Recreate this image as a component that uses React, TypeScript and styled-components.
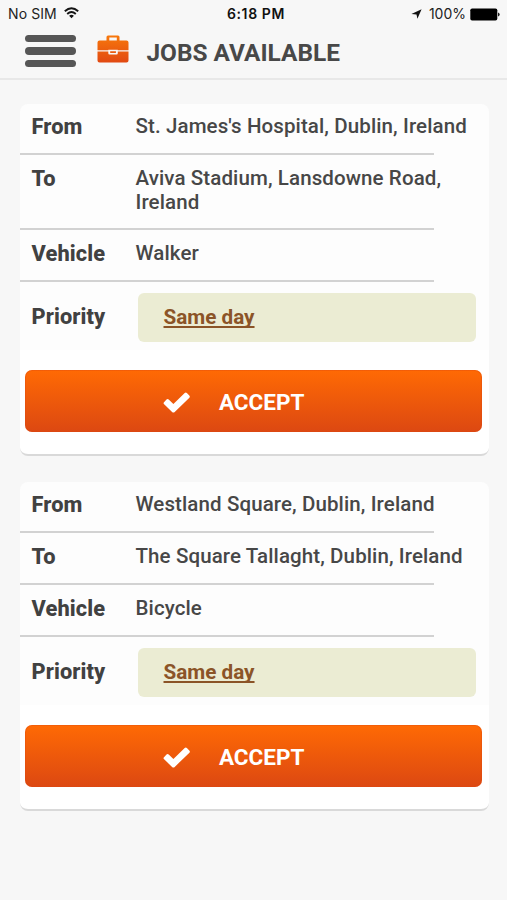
import React from 'react';
import styled, { createGlobalStyle } from 'styled-components';

const GlobalStyle = createGlobalStyle`
  * { box-sizing: border-box; }
  body { margin: 0; background: #f7f7f7; color: #414141; font-family: Roboto, "Liberation Sans", sans-serif; }
`;

const Screen = styled.div`
  width: 507px;
  height: 900px;
  overflow: hidden;
  background: #f7f7f7;
`;

const StatusBar = styled.div`
  display: grid;
  grid-template-columns: 1fr auto 1fr;
  align-items: center;
  height: 28px;
  padding: 0 7px 0 8px;
  font: 400 14px/28px Inter, sans-serif;
  color: #222;
`;

const Carrier = styled.div`
  display: flex;
  align-items: center;
  gap: 7px;
  letter-spacing: 0.1px;
  svg { margin-top: -3px; }
`;

const Clock = styled.div`
  padding-left: 4px;
  font-weight: 600;
  letter-spacing: 0.6px;
  color: #111;
`;

const Power = styled.div`
  display: flex;
  justify-content: flex-end;
  align-items: center;
  letter-spacing: 0;
  svg:first-child { margin-right: 7px; }
  svg:last-child { margin-left: 4px; }
`;

const Header = styled.header`
  display: flex;
  align-items: flex-start;
  height: 52px;
  padding-left: 25px;
  border-bottom: 2px solid #e8e8e8;
`;

const MenuButton = styled.button`
  display: flex;
  flex-direction: column;
  gap: 5.3px;
  width: 51px;
  padding: 0;
  margin-top: 7px;
  border: 0;
  background: none;
`;

const MenuLine = styled.span`
  height: 7.2px;
  border-radius: 4px;
  background: #565656;
`;

const Briefcase = styled.svg`
  margin: 7.3px 0 0 21px;
`;

const Title = styled.h1`
  margin: 8px 0 0 17.5px;
  font-size: 24.4px;
  line-height: 34px;
  font-weight: 700;
  letter-spacing: 0;
  color: #484848;
`;

const JobList = styled.main`
  display: flex;
  flex-direction: column;
  gap: 26px;
  padding: 24px 18.5px 0 19.5px;
`;

const Card = styled.article`
  padding-bottom: 22px;
  border-radius: 8px;
  border-bottom: 2px solid #d9d9d9;
  background: linear-gradient(#fdfdfd calc(100% - 104px), #fff calc(100% - 104px));
`;

const Row = styled.div<{ $first?: boolean; $tall?: boolean }>`
  display: grid;
  grid-template-columns: 104px 1fr;
  width: 414px;
  height: ${p => (p.$tall ? 75 : p.$first ? 51 : 52)}px;
  padding: ${p => (p.$first ? 9.5 : 11)}px 0 0 12px;
  border-bottom: 2px solid #d2d2d2;
`;

const Label = styled.span<{ $inRow?: boolean }>`
  padding-top: ${p => (p.$inRow ? 1 : 0)}px;
  font-size: 21.8px;
  line-height: 24px;
  font-weight: 800;
  letter-spacing: 0.1px;
  color: #414141;
`;

const Value = styled.span`
  font-size: 20.5px;
  line-height: 24px;
  font-weight: 500;
  letter-spacing: 0.11px;
  white-space: pre;
  color: #474747;
`;

const PriorityRow = styled.div`
  display: grid;
  grid-template-columns: 106px 338.5px;
  align-items: center;
  padding: 10.5px 0 0 12px;
`;

const PriorityBox = styled.div`
  height: 49px;
  padding: 12px 0 0 26px;
  border-radius: 6px;
  background: #ebecd3;
`;

const PriorityLink = styled.a`
  display: block;
  font-size: 20.7px;
  line-height: 25px;
  font-weight: 700;
  color: #8b5427;
  text-decoration: underline;
  text-decoration-thickness: 1.5px;
  text-underline-offset: 2px;
  text-decoration-skip-ink: none;
`;

const AcceptButton = styled.button`
  display: flex;
  align-items: center;
  width: 457px;
  height: 62px;
  margin: 28.5px 0 0 5.9px;
  padding: 2px 0 0 137.5px;
  border: 0;
  border-radius: 7px;
  background: linear-gradient(#ff6a04, #dc4812);
  box-shadow: inset 0 0 0 1px rgba(220, 72, 18, 0.35);
  color: #fff;
  font: 700 22.5px/28px Roboto, sans-serif;
  svg { margin: 0 28px 0 0; }
`;

type Job = { from: string; to: string; vehicle: string; priority: string };

const jobs: Job[] = [
  {
    from: "St. James's Hospital, Dublin, Ireland",
    to: 'Aviva Stadium, Lansdowne Road,\nIreland',
    vehicle: 'Walker',
    priority: 'Same day',
  },
  {
    from: 'Westland Square, Dublin, Ireland',
    to: 'The Square Tallaght, Dublin, Ireland',
    vehicle: 'Bicycle',
    priority: 'Same day',
  },
];

const WifiIcon = () => (
  <svg width="15" height="12" viewBox="0 0 15 12" fill="none" stroke="#151515" strokeWidth="1.9">
    <path d="M.8 4.3Q7.5-1.8 14.2 4.3M3.2 7Q7.5 3.2 11.8 7" />
    <path d="M5.1 8.8Q7.5 6.8 9.9 8.8L7.5 11.3Z" fill="#151515" stroke="none" />
  </svg>
);

const LocationIcon = () => (
  <svg width="11" height="10" viewBox="0 0 11 10">
    <path d="M10.6.3 6.4 9.8 5.5 5.5.4 5.1Z" fill="#111" />
  </svg>
);

const BatteryIcon = () => (
  <svg width="30" height="13" viewBox="0 0 30 13">
    <rect x=".3" y=".5" width="27" height="12" rx="1.8" fill="#000" />
    <path d="M28 4.5q1.7.4 1.7 2t-1.7 2Z" fill="#222" />
  </svg>
);

const BriefcaseIcon = () => (
  <Briefcase width="32" height="28" viewBox="0 0 32 28">
    <defs>
      <linearGradient id="case" x1="0" y1="0" x2="0" y2="28" gradientUnits="userSpaceOnUse">
        <stop stopColor="#f8790b" />
        <stop offset="1" stopColor="#e14812" />
      </linearGradient>
    </defs>
    <g fill="url(#case)">
      <path
        fillRule="evenodd"
        d="M9.5 5.5V2Q9.5.5 11 .5H21Q22.5.5 22.5 2V5.5H29.5Q31.5 5.5 31.5 7.5V15.2H20.8V14.8H11.3V15.2H.5V7.5Q.5 5.5 2.5 5.5ZM12.3 5.5H19.8V2.6H12.3Z"
      />
      <path d="M.5 16.5H11.3V18.2Q11.3 19.5 12.6 19.5H19.5Q20.8 19.5 20.8 18.2V16.5H31.5V25.5Q31.5 27.5 29.5 27.5H2.5Q.5 27.5.5 25.5Z" />
      <rect x="13.1" y="16.2" width="5.9" height="1.7" rx=".4" />
    </g>
  </Briefcase>
);

const CheckIcon = () => (
  <svg width="28" height="21" viewBox="0 0 28 21">
    <path d="M.8 10.5 3.5 7.4Q4.6 6.4 5.7 7.4L10.4 12 21.7.9Q22.8 0 23.9.9L26.5 3.7Q27.3 4.7 26.4 5.7L11.7 19.9Q10.4 21 9.1 19.9L.9 12.1Q.2 11.3.8 10.5Z" fill="#fff" />
  </svg>
);

const JobCard = ({ job }: { job: Job }) => (
  <Card>
    <Row $first>
      <Label $inRow>From</Label>
      <Value>{job.from}</Value>
    </Row>
    <Row $tall={job.to.includes('\n')}>
      <Label $inRow>To</Label>
      <Value>{job.to}</Value>
    </Row>
    <Row>
      <Label $inRow>Vehicle</Label>
      <Value>{job.vehicle}</Value>
    </Row>
    <PriorityRow>
      <Label>Priority</Label>
      <PriorityBox>
        <PriorityLink>{job.priority}</PriorityLink>
      </PriorityBox>
    </PriorityRow>
    <AcceptButton>
      <CheckIcon />
      ACCEPT
    </AcceptButton>
  </Card>
);

export default function App() {
  return (
    <Screen>
      <GlobalStyle />
      <StatusBar>
        <Carrier>No SIM <WifiIcon /></Carrier>
        <Clock>6:18 PM</Clock>
        <Power><LocationIcon />100%<BatteryIcon /></Power>
      </StatusBar>
      <Header>
        <MenuButton aria-label="Menu">
          <MenuLine />
          <MenuLine />
          <MenuLine />
        </MenuButton>
        <BriefcaseIcon />
        <Title>JOBS AVAILABLE</Title>
      </Header>
      <JobList>
        {jobs.map(job => <JobCard key={job.from} job={job} />)}
      </JobList>
    </Screen>
  );
}
